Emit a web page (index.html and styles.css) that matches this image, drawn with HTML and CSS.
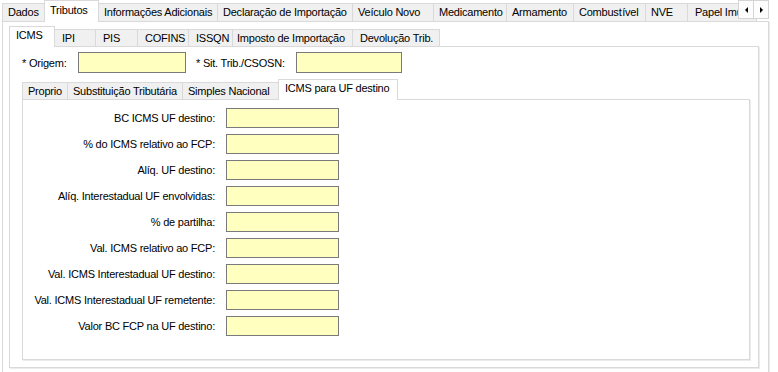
FILE: index.html
```html
<!DOCTYPE html>
<html>
<head>
<meta charset="utf-8">
<link rel="stylesheet" href="styles.css">
</head>
<body>
<div class="outer">
  <div class="strip strip-outer">
    <div class="tab t-dados">Dados</div>
    <div class="tab sel t-trib">Tributos</div>
    <div class="tab t-info">Informações Adicionais</div>
    <div class="tab t-decl">Declaração de Importação</div>
    <div class="tab t-veic">Veículo Novo</div>
    <div class="tab t-med">Medicamento</div>
    <div class="tab t-arm">Armamento</div>
    <div class="tab t-comb">Combust&#8202;ível</div>
    <div class="tab t-nve">NVE</div>
    <div class="tab t-papel">Papel Imune</div>
    <div class="scroller">
      <div class="sbtn"><span class="arr arr-l"></span></div>
      <div class="sbtn"><span class="arr arr-r"></span></div>
    </div>
  </div>
  <div class="panel panel-outer">
    <div class="strip strip-mid">
      <div class="tab sel m-icms">ICMS</div>
      <div class="tab m-ipi">IPI</div>
      <div class="tab m-pis">PIS</div>
      <div class="tab m-cof">COFINS</div>
      <div class="tab m-iss">ISSQN</div>
      <div class="tab m-imp">Imposto de Importação</div>
      <div class="tab m-dev">Devolução Trib.</div>
    </div>
    <div class="panel panel-mid">
      <div class="toprow">
        <span class="lbl lbl-orig">* Origem:</span>
        <span class="inp inp-orig"></span>
        <span class="lbl lbl-sit">* Sit. Trib./CSOSN:</span>
        <span class="inp inp-sit"></span>
      </div>
      <div class="strip strip-in">
        <div class="tab i-prop">Proprio</div>
        <div class="tab i-st">Substituição Tributária</div>
        <div class="tab i-sn">Simples Nacional</div>
        <div class="tab sel i-uf">ICMS para UF destino</div>
      </div>
      <div class="panel panel-in">
        <div class="fields">
          <span class="flbl">BC ICMS UF destino:</span><span class="inp finp"></span>
          <span class="flbl">% do ICMS relativo ao FCP:</span><span class="inp finp"></span>
          <span class="flbl">Alíq. UF destino:</span><span class="inp finp"></span>
          <span class="flbl">Alíq. Interestadual UF envolvidas:</span><span class="inp finp"></span>
          <span class="flbl">% de partilha:</span><span class="inp finp"></span>
          <span class="flbl">Val. ICMS relativo ao FCP:</span><span class="inp finp"></span>
          <span class="flbl">Val. ICMS Interestadual UF destino:</span><span class="inp finp"></span>
          <span class="flbl">Val. ICMS Interestadual UF remetente:</span><span class="inp finp"></span>
          <span class="flbl">Valor BC FCP na UF destino:</span><span class="inp finp"></span>
        </div>
      </div>
    </div>
  </div>
</div>
</body>
</html>
```
FILE: styles.css
```css
html, body {
  margin: 0;
  padding: 0;
  background: #ffffff;
  overflow: hidden;
}
body {
  font-family: "Liberation Sans", Arial, sans-serif;
  font-size: 11px;
  color: #000;
  letter-spacing: -0.22px;
}
.outer {
  margin-left: 2px;
  width: 767px;
}
.strip {
  display: flex;
  align-items: flex-end;
  position: relative;
}
.tab {
  box-sizing: border-box;
  border: 1px solid #d9d9d9;
  border-bottom: none;
  background: #f0f0f0;
  margin-right: -1px;
  padding-left: 5px;
  white-space: nowrap;
  overflow: hidden;
  flex: none;
}
.tab.sel {
  background: #ffffff;
  position: relative;
  z-index: 2;
}
/* outer strip */
.strip-outer { height: 22px; }
.strip-outer .tab { height: 19px; line-height: 17px; }
.strip-outer .tab.sel { height: 22px; line-height: 18px; }
.t-dados { width: 44px; }
.t-trib { width: 55px; margin-left: -1px; }
.t-info { width: 120px; }
.t-decl { width: 136px; }
.t-veic { width: 82px; }
.t-med { width: 74px; }
.t-arm { width: 68px; }
.t-comb { width: 73px; }
.t-nve { width: 43px; }
.t-papel { width: 70px; padding-left: 7px; }
.scroller {
  position: absolute;
  left: 736px;
  top: 0;
  display: flex;
  z-index: 3;
  background: #fff;
}
.sbtn {
  box-sizing: border-box;
  width: 16px;
  height: 19px;
  border: 1px solid #d4d4d4;
  background: #fdfdfd;
  margin-right: -1px;
  display: flex;
  align-items: center;
  justify-content: center;
}
.arr { width: 0; height: 0; border-top: 3px solid transparent; border-bottom: 3px solid transparent; }
.arr-l { border-right: 3px solid #000; }
.arr-r { border-left: 3px solid #000; }

.panel {
  box-sizing: border-box;
  border: 1px solid #d9d9d9;
  background: #fff;
  margin-top: -1px;
  position: relative;
  box-shadow: 1px 1px 0 #ececec;
}
.panel-outer {
  height: 360px;
  padding: 4px 0 0 6px;
}
/* middle strip */
.strip-mid { height: 21px; }
.strip-mid .tab { height: 18px; line-height: 17px; padding-left: 7px; }
.strip-mid .tab.sel { height: 21px; line-height: 17px; padding-left: 6px; }
.m-icms { width: 46px; }
.m-ipi { width: 42px; }
.m-pis { width: 43px; }
.m-cof { width: 52px; }
.m-iss { width: 45px; }
.m-imp { width: 121px; padding-left: 4px !important; }
.m-dev { width: 88px; padding-left: 7px; }

.panel-mid {
  width: 750px;
  height: 322px;
  padding: 5px 0 0 12px;
}
.toprow {
  display: flex;
  align-items: center;
  height: 21px;
}
.lbl { white-space: nowrap; }
.lbl-orig { width: 56px; }
.lbl-sit { margin-left: 10px; width: 100px; }
.inp {
  box-sizing: border-box;
  display: block;
  border: 1px solid #7a7a7a;
  background: #ffffc0;
  flex: none;
}
.inp-orig { width: 108px; height: 21px; }
.inp-sit { width: 106px; height: 21px; }

.strip-in { height: 21px; margin-top: 6px; }
.strip-in .tab { height: 18px; line-height: 17px; padding-left: 5px; }
.strip-in .tab.sel { height: 21px; line-height: 17px; padding-left: 6px; }
.i-prop { width: 46px; }
.i-st { width: 116px; }
.i-sn { width: 97px; }
.i-uf { width: 120px; }

.panel-in {
  width: 728px;
  height: 261px;
  padding: 8px 0 0 0;
}
.fields {
  display: grid;
  grid-template-columns: 192px 113px;
  column-gap: 11px;
  row-gap: 6px;
  grid-auto-rows: 20px;
  align-items: center;
}
.flbl {
  text-align: right;
  white-space: nowrap;
}
.finp { height: 20px; width: 113px; }
```
